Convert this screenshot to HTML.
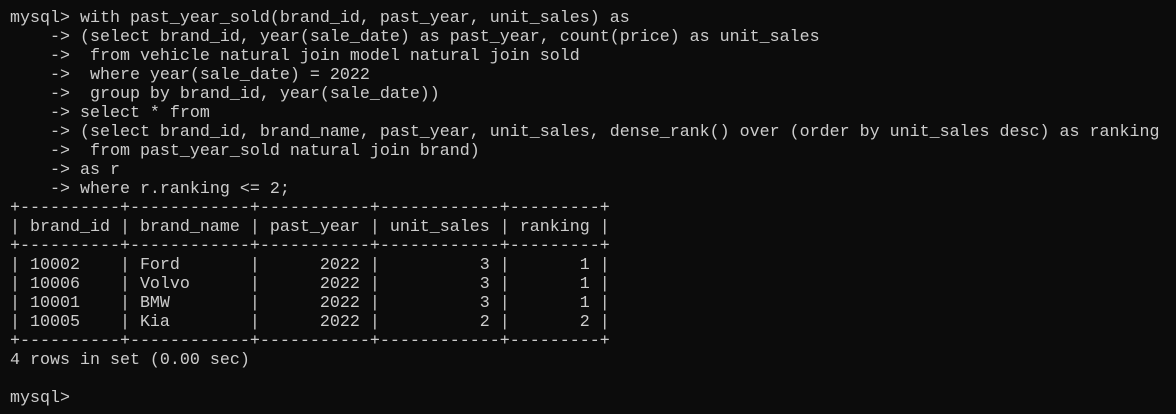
<!DOCTYPE html>
<html><head><style>
html,body{margin:0;padding:0;background:#0c0c0c;width:1176px;height:414px;overflow:hidden}
pre{margin:0;position:absolute;left:10px;top:9px;font-family:"Liberation Mono",monospace;font-size:16.67px;line-height:19px;color:#cccccc;white-space:pre}
</style></head><body><pre>mysql&gt; with past_year_sold(brand_id, past_year, unit_sales) as
    -&gt; (select brand_id, year(sale_date) as past_year, count(price) as unit_sales
    -&gt;  from vehicle natural join model natural join sold
    -&gt;  where year(sale_date) = 2022
    -&gt;  group by brand_id, year(sale_date))
    -&gt; select * from
    -&gt; (select brand_id, brand_name, past_year, unit_sales, dense_rank() over (order by unit_sales desc) as ranking
    -&gt;  from past_year_sold natural join brand)
    -&gt; as r
    -&gt; where r.ranking &lt;= 2;
+----------+------------+-----------+------------+---------+
| brand_id | brand_name | past_year | unit_sales | ranking |
+----------+------------+-----------+------------+---------+
| 10002    | Ford       |      2022 |          3 |       1 |
| 10006    | Volvo      |      2022 |          3 |       1 |
| 10001    | BMW        |      2022 |          3 |       1 |
| 10005    | Kia        |      2022 |          2 |       2 |
+----------+------------+-----------+------------+---------+
4 rows in set (0.00 sec)

mysql&gt;</pre></body></html>
